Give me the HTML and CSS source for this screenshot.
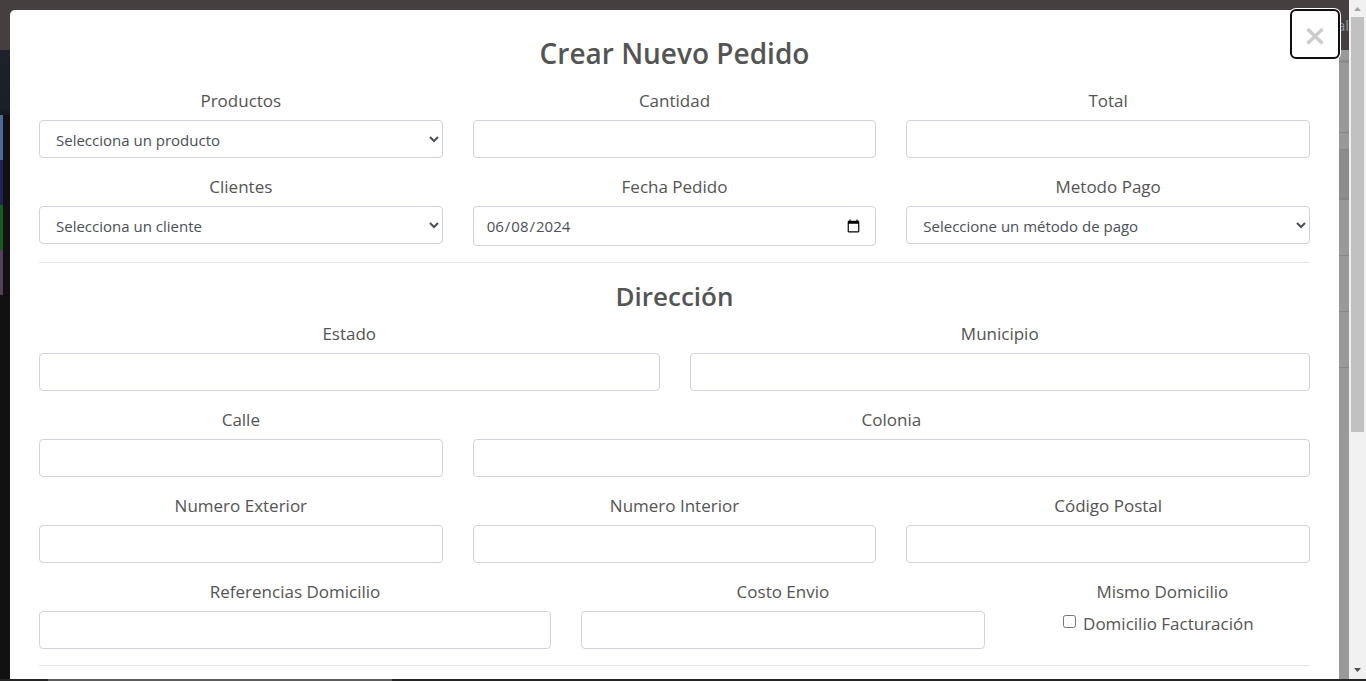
FILE: index.html
```html
<!DOCTYPE html>
<html lang="es">
<head>
<meta charset="utf-8">
<title>Crear Nuevo Pedido</title>
<link rel="stylesheet" href="styles.css">
</head>
<body>
<div class="window">
  <div class="page">
    <div class="backdrop">
      <header class="topbar"><span>al</span></header>
      <div class="shell">
        <nav class="sidebar">
          <div class="profile"></div>
          <div class="mark mark-blue"></div>
          <div class="mark mark-navy"></div>
          <div class="mark mark-green"></div>
          <div class="mark mark-plum"></div>
        </nav>
        <div class="content">
          <div class="crumbs"></div>
          <div class="tools"></div>
          <div class="gap"></div>
          <div class="thead"></div>
          <div class="trow"></div>
          <div class="trow"></div>
          <div class="trow"></div>
        </div>
      </div>
    </div>

    <div class="modal" role="dialog" aria-labelledby="modal-title">
      <button class="close" type="button" aria-label="Cerrar">
        <svg width="18" height="18" viewBox="0 0 18 18"><path d="M1.500 2 16.500 16.500M16.500 2 1.500 16.500" fill="none" stroke="#ccc" stroke-width="3.500"/></svg>
      </button>
      <h2 class="title" id="modal-title">Crear Nuevo Pedido</h2>
      <form class="form">
        <div class="row">
          <div class="field w4"><label for="producto">Productos</label><select id="producto" class="control"><option>Selecciona un producto</option></select></div>
          <div class="field w4"><label for="cantidad">Cantidad</label><input id="cantidad" class="control" type="text"></div>
          <div class="field w4"><label for="total">Total</label><input id="total" class="control" type="text"></div>
        </div>
        <div class="row">
          <div class="field w4"><label for="cliente">Clientes</label><select id="cliente" class="control"><option>Selecciona un cliente</option></select></div>
          <div class="field w4"><label for="fecha">Fecha Pedido</label><input id="fecha" class="control date" type="date" value="2024-06-08"></div>
          <div class="field w4"><label for="pago">Metodo Pago</label><select id="pago" class="control"><option>Seleccione un método de pago</option></select></div>
        </div>
        <hr>
        <h3 class="subtitle">Dirección</h3>
        <div class="row">
          <div class="field w6"><label for="estado">Estado</label><input id="estado" class="control" type="text"></div>
          <div class="field w6"><label for="municipio">Municipio</label><input id="municipio" class="control" type="text"></div>
        </div>
        <div class="row">
          <div class="field w4"><label for="calle">Calle</label><input id="calle" class="control" type="text"></div>
          <div class="field w8"><label for="colonia">Colonia</label><input id="colonia" class="control" type="text"></div>
        </div>
        <div class="row">
          <div class="field w4"><label for="exterior">Numero Exterior</label><input id="exterior" class="control" type="text"></div>
          <div class="field w4"><label for="interior">Numero Interior</label><input id="interior" class="control" type="text"></div>
          <div class="field w4"><label for="postal">Código Postal</label><input id="postal" class="control" type="text"></div>
        </div>
        <div class="row">
          <div class="field w5"><label for="referencias">Referencias Domicilio</label><input id="referencias" class="control" type="text"></div>
          <div class="field w4"><label for="envio">Costo Envio</label><input id="envio" class="control" type="text"></div>
          <div class="field w3">
            <span class="caption">Mismo Domicilio</span>
            <div class="check"><input id="mismo" type="checkbox"><label for="mismo">Domicilio Facturación</label></div>
          </div>
        </div>
        <hr>
      </form>
    </div>
  </div>
  <div class="scrollbar">
    <svg width="17" height="17" viewBox="0 0 17 17"><path d="M5 11h7L8.500 7z" fill="#a3a3a3"/></svg>
    <div class="track"><div class="thumb"></div></div>
    <svg width="17" height="17" viewBox="0 0 17 17"><path d="M5 6h7L8.500 10z" fill="#505050"/></svg>
  </div>
</div>
<div class="taskbar"><div class="search"></div></div>
</body>
</html>
```
FILE: styles.css
```css
* { box-sizing: border-box; }
body {
  margin: 0;
  height: 100vh;
  display: flex;
  flex-direction: column;
  overflow: hidden;
  font-family: "Open Sans", "Noto Sans", sans-serif;
  color: #545454;
}
.window { flex: 1; min-height: 0; display: flex; }
.page { flex: 1; min-width: 0; position: relative; overflow: hidden; }

/* dimmed page behind the dialog */
.backdrop { height: 100%; display: flex; flex-direction: column; background: #999; }
.topbar {
  height: 50px;
  flex: none;
  display: flex;
  align-items: center;
  justify-content: flex-end;
  background: #45403f;
  color: #8c96a0;
  font-size: 15px;
}
.shell { flex: 1; display: flex; }
.sidebar { width: 230px; background: #111; }
.profile { height: 65px; background: linear-gradient(#1e212b, #1a1f28 90%, #14171c); }
.mark { height: 45px; border-left: 3px solid; }
.mark-blue { border-color: #4b6a9d; }
.mark-navy { border-color: #1f2558; }
.mark-green { border-color: #155c20; }
.mark-plum { border-color: #54405a; }
.content { flex: 1; }
.crumbs { height: 13px; border-bottom: 3px solid #8b8b8c; }
.tools { height: 70px; border-bottom: 1px solid #858585; }
.gap { height: 16px; }
.thead { height: 51px; background: #8b8c8e; border-top: 1px solid #858687; border-bottom: 2px solid #858687; }
.trow { height: 56px; border-bottom: 1px solid #858687; }

/* dialog */
.modal {
  position: absolute;
  inset: 10px 10px 0;
  padding: 24px 29px 0;
  background: #fff;
  border-radius: 5px 5px 0 0;
}
.close {
  position: absolute;
  top: 1px;
  right: 1px;
  width: 46px;
  height: 46px;
  display: flex;
  align-items: center;
  justify-content: center;
  padding: 4px 0 0;
  border: 0;
  border-radius: 4px;
  background: #fff;
  outline: 2px solid #101010;
  box-shadow: 0 0 0 3px #fff;
}
.title, .subtitle { margin: 0; text-align: center; font-weight: 600; }
.title { font-size: 28px; line-height: 38px; margin-bottom: 15px; }
.subtitle { font-size: 26px; line-height: 36px; margin-bottom: 6px; }
.row { display: grid; grid-template-columns: repeat(12, 1fr); column-gap: 30px; }
.field { display: flex; flex-direction: column; min-width: 0; margin-bottom: 15px; text-align: center; }
.w3 { grid-column: span 3; }
.w4 { grid-column: span 4; }
.w5 { grid-column: span 5; }
.w6 { grid-column: span 6; }
.w8 { grid-column: span 8; }
label, .caption { font-size: 17px; line-height: 28px; }
.field > label, .caption { margin-bottom: 5px; }
.control {
  width: 100%;
  height: 38px;
  padding: 6px 12px;
  border: 1px solid #ced4da;
  border-radius: 4px;
  background: #fff;
  color: #495057;
  font-family: inherit;
  font-size: 15px;
  line-height: 24px;
}
select.control { padding: 7px 12px 5px; }
.date { height: 40px; }
.check { display: flex; justify-content: center; gap: 7px; padding-right: 8px; }
.check input { width: 13px; height: 13px; margin: 4px 0 0; }
.check label { line-height: 26px; }
hr { margin: 1px 0 15px; border: 0; border-top: 1px solid #e5e5e5; }

/* scrollbar column and taskbar edge */
.scrollbar { width: 17px; display: flex; flex-direction: column; background: #f1f1f1; }
.scrollbar svg { flex: none; }
.track { flex: 1; padding: 0 2px; }
.thumb { height: 64.4%; background: #c1c1c1; }
.taskbar { height: 2px; flex: none; padding-left: 48px; background: #242424; }
.search { width: 344px; height: 2px; background: #5a5d5a; }
```
